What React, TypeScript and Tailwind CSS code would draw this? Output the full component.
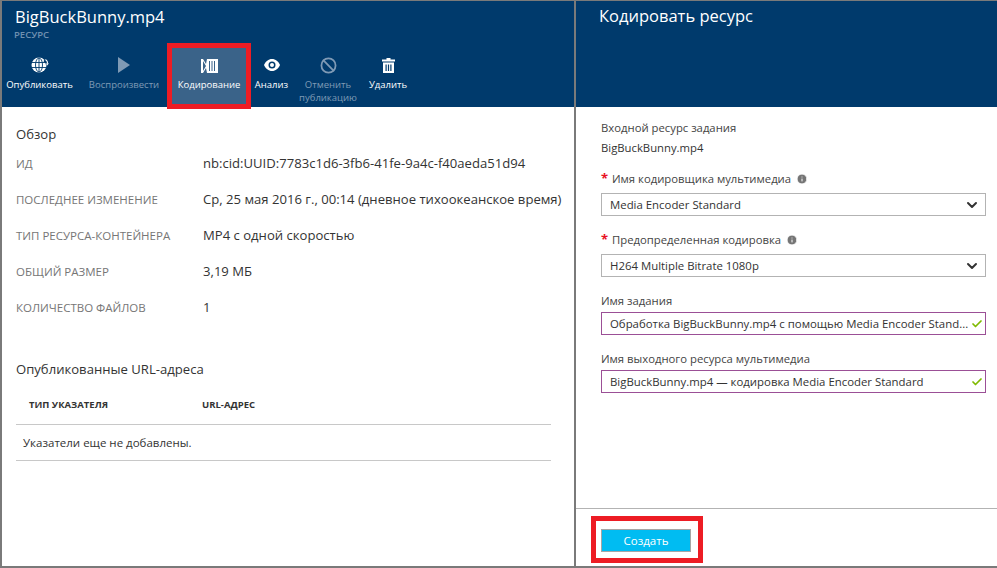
import { Ban, Check, ChevronDown, Info } from "lucide-react";

const font = "font-['Open_Sans','Noto_Sans',sans-serif]";

function GlobeIcon() {
  return (
    <svg width="18" height="16" viewBox="0 0 18 16" fill="none">
      <circle cx="8" cy="8" r="7.500" fill="#fff" />
      <ellipse cx="8" cy="8" rx="3.500" ry="7" stroke="#003a6c" strokeWidth="0.900" />
      <path d="M8 1v14M1 5.500h14M1 10.500h14" stroke="#003a6c" strokeWidth="0.900" />
      <path d="M13 3.500c1.800 1.100 3 2.700 3 4.500" stroke="#003a6c" strokeWidth="2" />
      <path d="M14.500 2.500c1.400.9 2.200 2.500 2.200 4.200" stroke="#fff" strokeWidth="1.200" />
      <path d="M14.600 6.400h3.200l-1.600 2.200z" fill="#fff" />
    </svg>
  );
}

function PlayIcon() {
  return (
    <svg width="14" height="18" viewBox="0 0 14 18">
      <path d="M1 1l12 8-12 8z" fill="#7f9ab5" />
    </svg>
  );
}

function EncodeIcon() {
  return (
    <svg width="17" height="14" viewBox="0 0 17 14" fill="none">
      <path d="M0 0h2l3 5 1-5h11v14H6l-1-5-3 5H0z" fill="#fff" />
      <path d="M2 2l3 5-3 5zM8 2h1v10H8zM10.500 2h1v10h-1zM13 2h1v10h-1z" fill="#3a6389" />
    </svg>
  );
}

function EyeIcon() {
  return (
    <svg width="16" height="12" viewBox="0 0 16 12">
      <path d="M8 0c3.600 0 6.400 2.500 8 6-1.600 3.500-4.400 6-8 6S1.600 9.500 0 6c1.600-3.500 4.400-6 8-6z" fill="#fff" />
      <circle cx="8" cy="6" r="3.500" fill="#003a6c" />
      <circle cx="8" cy="6" r="2" fill="#fff" />
    </svg>
  );
}

function TrashIcon() {
  return (
    <svg width="13" height="15" viewBox="0 0 13 15">
      <path d="M4.500 0h4v1.500H13V3.500H0V1.500h4.500zM1 4.500h11V15H1z" fill="#fff" />
      <path d="M3.500 6.500h1.200v6.500H3.500zM5.900 6.500h1.200v6.500H5.900zM8.300 6.500h1.200v6.500H8.300z" fill="#003a6c" />
    </svg>
  );
}

function ToolButton({ icon, label, dim }: { icon: React.ReactNode; label: string; dim?: boolean }) {
  return (
    <div className="flex flex-col items-center w-full pt-[8px]">
      <div className="h-[28px] flex items-center justify-center">{icon}</div>
      <div className={`text-[9.500px] leading-[12.500px] text-center ${dim ? "text-[#7f9ab5]" : "text-white"}`}>{label}</div>
    </div>
  );
}

function Row({ label, value }: { label: string; value: string }) {
  return (
    <div className="flex items-center h-[36px]">
      <div className="w-[187px] shrink-0 text-[11.500px] text-[#767676]">{label}</div>
      <div className="text-[13.100px] text-[#333] whitespace-nowrap">{value}</div>
    </div>
  );
}

function Label({ text, required }: { text: string; required?: boolean }) {
  return (
    <div className="flex items-center h-[16px] text-[11.300px] text-[#444]">
      {required && <span className="text-[#e81123] font-bold w-[11px] text-[13px]">*</span>}
      <span>{text}</span>
      {required && <Info size={12} className="ml-[5px] text-white fill-[#757575]" />}
    </div>
  );
}

function Select({ value }: { value: string }) {
  return (
    <div className="h-[23px] mt-[6px] border border-[#b3b3b3] flex items-center justify-between pl-[8px] pr-[5px] text-[11.400px] text-[#333]">
      <span>{value}</span>
      <ChevronDown size={16} strokeWidth={3} className="text-[#333]" />
    </div>
  );
}

function TextBox({ value }: { value: string }) {
  return (
    <div className="h-[23px] mt-[3px] border border-[#9b4f96] flex items-center justify-between pl-[8px] pr-[2px] text-[11.400px] text-[#333]">
      <span className="whitespace-nowrap">{value}</span>
      <Check size={12} strokeWidth={3.500} className="text-[#7fba00]" />
    </div>
  );
}

export default function App() {
  return (
    <div className={`${font} w-[997px] h-[568px] bg-white border-t border-l-2 border-b-2 border-[#7a7a7a] flex overflow-hidden`}>
      <div className="w-[572px] shrink-0 flex flex-col">
        <div className="h-[106px] bg-[#003a6c]">
          <div className="pl-[13px] pt-[3px] text-[16.500px] leading-[26px] text-white">BigBuckBunny.mp4</div>
          <div className="pl-[12px] text-[9.500px] leading-[10px] font-semibold text-[#6f90b0]">РЕСУРС</div>
          <div className="flex mt-[3px] h-[66px]">
            <div className="w-[75px]">
              <ToolButton label="Опубликовать" icon={<GlobeIcon />} />
            </div>
            <div className="w-[90px] pl-[4px]">
              <ToolButton dim label="Воспроизвести" icon={<PlayIcon />} />
            </div>
            <div className="w-[84px] h-[66px] border-[5px] border-[#ed1c24] bg-[#3a6389] flex flex-col items-center z-10 pt-[8px]">
              <div className="h-[20px] flex items-center"><EncodeIcon /></div>
              <div className="text-[9.500px] leading-[12px] mt-[3px] text-white whitespace-nowrap">Кодирование</div>
            </div>
            <div className="w-[40px] pl-[1px]">
              <ToolButton label="Анализ" icon={<EyeIcon />} />
            </div>
            <div className="w-[74px] px-[8px]">
              <ToolButton dim label="Отменить публикацию" icon={<Ban size={17} strokeWidth={2.500} className="text-[#7f9ab5]" />} />
            </div>
            <div className="w-[46px]">
              <ToolButton label="Удалить" icon={<TrashIcon />} />
            </div>
          </div>
        </div>
        <div className="flex-1 pl-[14px] pr-[23px] pt-[17px]">
          <div className="text-[13.100px] leading-[20px] text-[#333]">Обзор</div>
          <div className="mt-[2px]">
            <Row label="ИД" value="nb:cid:UUID:7783c1d6-3fb6-41fe-9a4c-f40aeda51d94" />
            <Row label="ПОСЛЕДНЕЕ ИЗМЕНЕНИЕ" value="Ср, 25 мая 2016 г., 00:14 (дневное тихоокеанское время)" />
            <Row label="ТИП РЕСУРСА-КОНТЕЙНЕРА" value="MP4 с одной скоростью" />
            <Row label="ОБЩИЙ РАЗМЕР" value="3,19 МБ" />
            <Row label="КОЛИЧЕСТВО ФАЙЛОВ" value="1" />
          </div>
          <div className="mt-[33px] text-[13.100px] leading-[20px] text-[#333]">Опубликованные URL-адреса</div>
          <div className="mt-[16px] h-[30px] pb-[9px] flex items-center pl-[13px] border-b border-[#c8c8c8] text-[9.500px] font-bold text-[#333]">
            <div className="w-[173px]">ТИП УКАЗАТЕЛЯ</div>
            <div>URL-АДРЕС</div>
          </div>
          <div className="h-[36px] flex items-center pl-[7px] border-b border-[#c8c8c8] text-[11.500px] text-[#333]">Указатели еще не добавлены.</div>
        </div>
      </div>
      <div className="flex-1 flex flex-col border-l-2 border-[#7a7a7a]">
        <div className="h-[106px] bg-[#003a6c] pl-[23px] pt-[2px] text-[16.500px] leading-[26px] text-white">Кодировать ресурс</div>
        <div className="flex-1 pl-[25px] pr-[11px] pt-[13px]">
          <div className="text-[11.300px] leading-[16px] text-[#444]">Входной ресурс задания</div>
          <div className="mt-[4px] text-[11.300px] leading-[16px] text-[#333]">BigBuckBunny.mp4</div>
          <div className="mt-[15px]"><Label required text="Имя кодировщика мультимедиа" /></div>
          <Select value="Media Encoder Standard" />
          <div className="mt-[16px]"><Label required text="Предопределенная кодировка" /></div>
          <Select value="H264 Multiple Bitrate 1080p" />
          <div className="mt-[16px]"><Label text="Имя задания" /></div>
          <TextBox value="Обработка BigBuckBunny.mp4 с помощью Media Encoder Stand..." />
          <div className="mt-[16px]"><Label text="Имя выходного ресурса мультимедиа" /></div>
          <TextBox value="BigBuckBunny.mp4 — кодировка Media Encoder Standard" />
        </div>
        <div className="h-[58px] border-t border-[#b3b3b3] pl-[15px] pt-[7px]">
          <div className="w-[112px] h-[47px] border-[5px] border-[#ed1c24] pl-[5px] pt-[8px]">
            <div className="w-[90px] h-[23px] bg-[#00bcf2] border border-[#a6a6a6] flex items-center justify-center text-[11.500px] text-white">Создать</div>
          </div>
        </div>
      </div>
    </div>
  );
}
